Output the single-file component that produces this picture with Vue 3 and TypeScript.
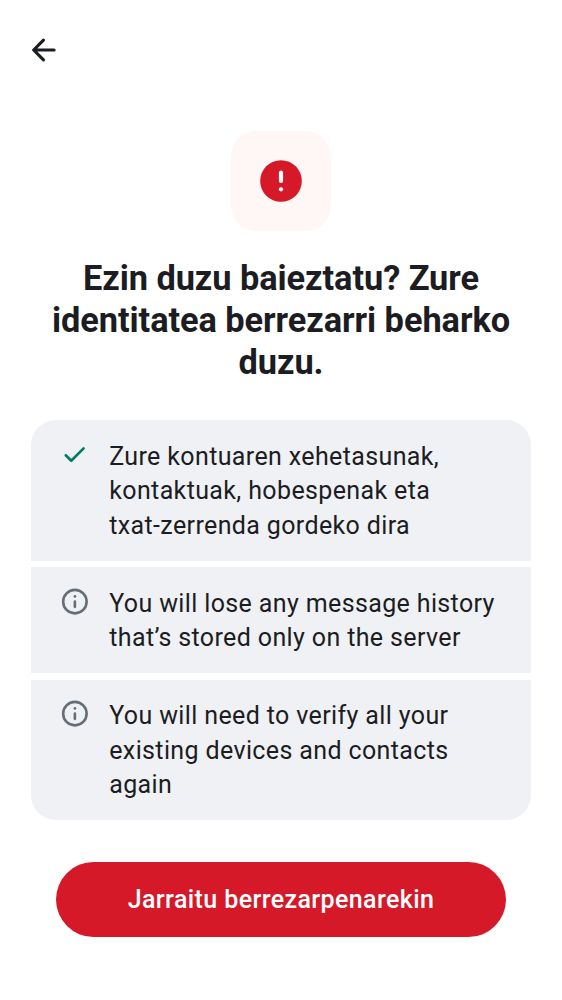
<script setup lang="ts">
interface Item { icon: 'check' | 'info'; lines: string[] }
const title: string[] = ['Ezin duzu baieztatu? Zure', 'identitatea berrezarri beharko', 'duzu.']
const items: Item[] = [
  { icon: 'check', lines: ['Zure kontuaren xehetasunak,', 'kontaktuak, hobespenak eta', 'txat-zerrenda gordeko dira'] },
  { icon: 'info', lines: ['You will lose any message history', 'that’s stored only on the server'] },
  { icon: 'info', lines: ['You will need to verify all your', 'existing devices and contacts', 'again'] },
]
</script>

<template>
  <main class="screen">
    <header class="bar">
      <button class="back" aria-label="Back">
        <svg width="38" height="38" viewBox="0 0 24 24"><path d="m12.3 18.2-6.2-6.2L12.3 5.8M6.3 12H19" /></svg>
      </button>
    </header>
    <div class="badge">
      <svg width="50" height="50" viewBox="0 0 24 24">
        <circle cx="12" cy="12" r="10" fill="#d51928" />
        <path d="M12 8v4" stroke="#fff" stroke-width="2" stroke-linecap="round" />
        <circle cx="12" cy="16" r="1" fill="#fff" />
      </svg>
    </div>
    <h1><span v-for="l in title" :key="l">{{ l }}</span></h1>
    <ul class="list">
      <li v-for="(item, i) in items" :key="i">
        <svg v-if="item.icon === 'check'" class="icon check" viewBox="0 0 24 24">
          <path d="m5.2 12.5 4.2 4.2L18.9 7.2" />
        </svg>
        <svg v-else class="icon info" viewBox="0 0 24 24">
          <circle class="ring" cx="12.2" cy="12" r="9" />
          <path d="M12.2 12v4" />
          <circle class="dot" cx="12.2" cy="8" r="1" />
        </svg>
        <p><span v-for="l in item.lines" :key="l">{{ l }}</span></p>
      </li>
    </ul>
    <button class="cta">Jarraitu berrezarpenarekin</button>
  </main>
</template>

<style>
body { margin: 0; background: #fff; }
</style>
<style scoped>
.screen { box-sizing: border-box; width: 562px; height: 1000px; display: flex; flex-direction: column; align-items: center; background: #fff; color: #1b1d22; font-family: Roboto, sans-serif; overflow: hidden; }
button { border: 0; padding: 0; font-family: inherit; }
.bar { flex: none; width: 100%; height: 100px; display: flex; align-items: center; box-sizing: border-box; padding-left: 24px; }
.back { display: flex; background: none; }
.back path { fill: none; stroke: #1b1d22; stroke-width: 2; stroke-linecap: round; stroke-linejoin: round; }
.badge { flex: none; margin-top: 31px; width: 100px; height: 100px; border-radius: 25px; background: #fff7f6; display: flex; align-items: center; justify-content: center; }
h1 { margin: 25.5px 0 0; font: 700 34.375px/42.2px Roboto, sans-serif; letter-spacing: -0.06px; text-align: center; }
span { display: block; white-space: nowrap; }
.list { list-style: none; margin: 37px 0 0; padding: 0; width: 500px; display: flex; flex-direction: column; gap: 6.32px; border-radius: 25px; overflow: hidden; }
li { display: flex; gap: 18.7px; padding: 19.75px 28px 17.75px 28.3px; background: #f0f1f5; }
.icon { flex: none; width: 31.25px; height: 31.25px; margin-top: -1px; }
.check path { fill: none; stroke: #007a61; stroke-width: 2; stroke-linecap: round; stroke-linejoin: round; }
.info .ring { fill: none; stroke: #656d77; stroke-width: 2; }
.info path { stroke: #656d77; stroke-width: 2; stroke-linecap: round; }
.info .dot { fill: #656d77; }
p { margin: 0; font-size: 25px; line-height: 34.375px; letter-spacing: 0.37px; }
.cta { flex: none; margin-top: 42.2px; width: 450px; height: 75px; border-radius: 38px; background: #d51928; color: #fff; font-size: 25px; font-weight: 500; letter-spacing: 0.4px; }
</style>
